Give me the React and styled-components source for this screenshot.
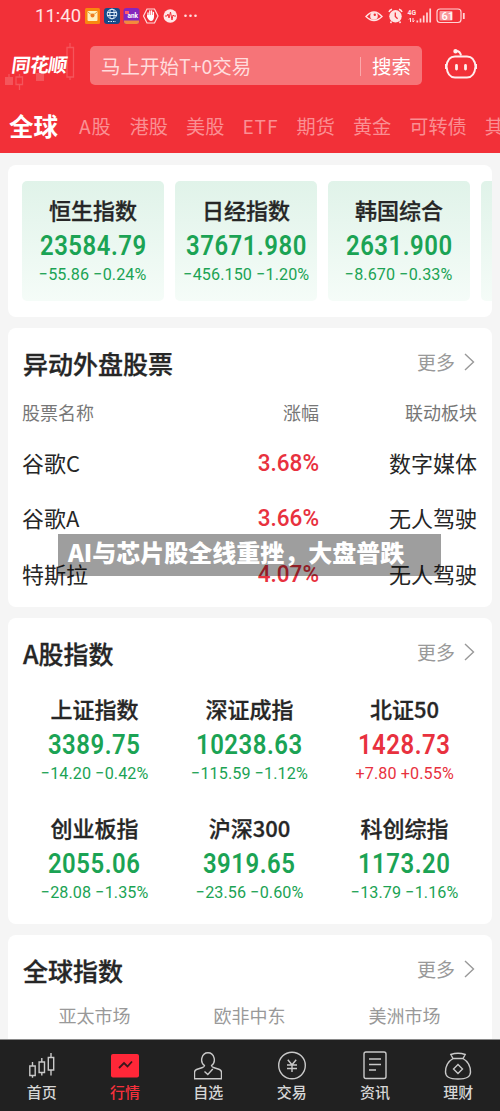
import React from "react";
import styled, { createGlobalStyle } from "styled-components";

const GlobalStyle = createGlobalStyle`
  * {
    box-sizing: border-box;
  }

  body {
    margin: 0;
    background: #f5f5f5;
    font-family: "Noto Sans CJK SC", sans-serif;
    color: #262626;
    overflow: hidden;
  }
`;

const GREEN = "#1ba354";
const RED = "#e8313e";

const Page = styled.div`
  position: relative;
  display: flex;
  flex-direction: column;
  width: 500px;
  height: 1111px;
  overflow: hidden;
`;

const Header = styled.header`
  flex: none;
  height: 153px;
  background: #f23038;
  color: #fff;
`;

const StatusBar = styled.div`
  display: flex;
  align-items: center;
  height: 32px;
  padding: 0 34px 0 35px;
`;

const Clock = styled.span`
  width: 50px;
  font-family: Roboto, sans-serif;
  font-size: 18.5px;
  line-height: 33px;
  white-space: nowrap;
  color: #ffe4e4;
`;

const SearchRow = styled.div`
  display: flex;
  align-items: center;
  height: 66px;
`;

const Logo = styled.div`
  position: relative;
  width: 90px;
  height: 66px;
  padding-left: 12px;
`;

const LogoCandles = styled.svg`
  position: absolute;
  left: 0;
  top: 8px;
`;

const LogoText = styled.span`
  position: relative;
  display: block;
  font-size: 19px;
  font-weight: 700;
  line-height: 63px;
  letter-spacing: -0.6px;
  white-space: nowrap;
  transform: skewX(-8deg);
`;

const SearchBox = styled.div`
  display: flex;
  align-items: center;
  width: 332px;
  height: 39px;
  padding: 0 11px;
  border-radius: 5px;
  background: #f67478;
  font-size: 19.5px;
  line-height: 37px;
`;

const Placeholder = styled.span`
  flex: 1;
  color: #ffdcdd;
`;

const SearchButton = styled.span`
  padding-left: 12px;
  background: linear-gradient(#fba9ab, #fba9ab) left 10px / 1px 19px no-repeat;
`;

const Robot = styled.svg`
  margin: 0 0 3px 21px;
`;

const Tabs = styled.nav`
  display: flex;
  align-items: center;
  gap: 18px;
  height: 55px;
  padding-left: 9px;
  overflow: hidden;
`;

const Tab = styled.span`
  flex: none;
  margin-right: ${(p) => (p.$active ? "3px" : 0)};
  font-size: ${(p) => (p.$active ? "24.5px" : "19.2px")};
  font-weight: ${(p) => (p.$active ? 700 : 400)};
  line-height: 56px;
  letter-spacing: ${(p) => (p.$latin ? "0.9px" : "normal")};
  color: ${(p) => (p.$active ? "#fff" : "#fa8f93")};
`;

const Content = styled.main`
  flex: 1;
  display: flex;
  flex-direction: column;
  gap: 11px;
  padding: 12px 8px 0;
  overflow: hidden;
`;

const Card = styled.section`
  flex: none;
  height: ${(p) => p.$height}px;
  border-radius: 8px;
  background: #fff;
  overflow: hidden;
`;

const TileStrip = styled.div`
  display: flex;
  gap: 11px;
  padding: 16px 0 0 14px;
`;

const Tile = styled.div`
  flex: none;
  width: 142px;
  height: 120px;
  padding-top: 12px;
  border-radius: 5px;
  background: linear-gradient(#e0f3e9, #f5fcf8);
`;

const Quote = styled.div`
  display: flex;
  flex-direction: column;
  align-items: center;
  white-space: nowrap;
  color: ${(p) => p.$color};
`;

const QuoteName = styled.div`
  font-size: 22px;
  font-weight: 500;
  line-height: 32px;
  color: #262626;
  -webkit-text-stroke: 0.3px #262626;
`;

const QuotePrice = styled.div`
  font-family: Roboto, sans-serif;
  font-size: 27.5px;
  font-weight: 600;
  line-height: 41px;
  letter-spacing: 0.6px;
  transform: scaleX(0.87);
`;

const QuoteChange = styled.div`
  font-family: Roboto, sans-serif;
  font-size: 17px;
  line-height: 16px;
  letter-spacing: 0.1px;
  transform: scaleX(0.95);
`;

const SectionHead = styled.div`
  display: flex;
  align-items: center;
  justify-content: space-between;
  height: 68px;
  padding: 0 17px 0 15px;
`;

const SectionTitle = styled.h2`
  margin: 0;
  padding-top: 2px;
  font-size: 25px;
  font-weight: 500;
  line-height: 68px;
  -webkit-text-stroke: 0.3px #262626;
`;

const More = styled.span`
  display: flex;
  align-items: center;
  gap: 9px;
  font-size: 19px;
  line-height: 66px;
  color: #999;
`;

const StockRow = styled.div`
  display: grid;
  grid-template-columns: 150px 1fr 158px;
  align-items: center;
  height: ${(p) => (p.$head ? "32px" : "55.5px")};
  padding: 0 15px 0 14px;
  font-size: ${(p) => (p.$head ? "18px" : "22px")};
  color: ${(p) => (p.$head ? "#777" : "#262626")};
`;

const StockList = styled.div`
  padding-top: 6px;
`;

const Cell = styled.span`
  text-align: ${(p) => (p.$right ? "right" : "left")};
`;

const Percent = styled.span`
  padding-top: 1px;
  font-family: Roboto, sans-serif;
  font-size: 24.5px;
  font-weight: 500;
  text-align: right;
  transform: scaleX(0.92);
  transform-origin: right;
  color: ${RED};
`;

const QuoteGrid = styled.div`
  display: grid;
  grid-template-columns: repeat(3, 155px);
  grid-auto-rows: 119.5px;
  padding: 6px 0 0 9px;
`;

const MarketTabs = styled.div`
  display: grid;
  grid-template-columns: repeat(3, 155px);
  padding: 0 0 0 9px;
  font-size: 18px;
  line-height: 24px;
  text-align: center;
  color: #999;
`;

const Banner = styled.div`
  position: absolute;
  left: 58px;
  top: 534px;
  width: 383px;
  height: 42px;
  padding-left: 10px;
  background: rgba(0, 0, 0, 0.38);
  font-size: 24px;
  font-weight: 900;
  line-height: 36px;
  white-space: nowrap;
  color: #fff;
`;

const BottomNav = styled.nav`
  flex: none;
  display: grid;
  grid-template-columns: repeat(6, 1fr);
  height: 72px;
  border-top: 1px solid #8a8a8a;
  background: #212121;
`;

const NavItem = styled.div`
  display: flex;
  flex-direction: column;
  align-items: center;
  padding-top: 9px;
  font-size: 15px;
  line-height: 21px;
  font-weight: 500;
  color: ${(p) => (p.$active ? "#f5303c" : "#d6d6d6")};
`;

const globalQuotes = [
  { name: "恒生指数", price: "23584.79", change: "−55.86 −0.24%" },
  { name: "日经指数", price: "37671.980", change: "−456.150 −1.20%" },
  { name: "韩国综合", price: "2631.900", change: "−8.670 −0.33%" },
];

const aQuotes = [
  { name: "上证指数", price: "3389.75", change: "−14.20 −0.42%" },
  { name: "深证成指", price: "10238.63", change: "−115.59 −1.12%" },
  { name: "北证50", price: "1428.73", change: "+7.80 +0.55%", up: true },
  { name: "创业板指", price: "2055.06", change: "−28.08 −1.35%" },
  { name: "沪深300", price: "3919.65", change: "−23.56 −0.60%" },
  { name: "科创综指", price: "1173.20", change: "−13.79 −1.16%" },
];

const stocks = [
  { name: "谷歌C", percent: "3.68%", sector: "数字媒体" },
  { name: "谷歌A", percent: "3.66%", sector: "无人驾驶" },
  { name: "特斯拉", percent: "4.07%", sector: "无人驾驶" },
];

const tabs = ["全球", "A股", "港股", "美股", "ETF", "期货", "黄金", "可转债", "其"];

const StatusIcons = () => (
  <svg width="116" height="20" viewBox="85 6 116 20">
    <rect x="85" y="8" width="15" height="16" rx="1.5" fill="#f9870f" />
    <rect x="87.500" y="11" width="10" height="10" rx="1" fill="#fff0bf" />
    <path d="M88 12q4.500 5 9 0" fill="none" stroke="#e7a13c" />
    <circle cx="92.500" cy="15.500" r="2" fill="#ee7d20" />
    <rect x="104" y="8" width="16" height="16" rx="3" fill="#174a88" />
    <g fill="none" stroke="#dcecf8" strokeWidth="1">
      <circle cx="112" cy="14" r="4.800" />
      <ellipse cx="112" cy="14" rx="2.200" ry="4.800" />
      <path d="M107 12.500h10M107 15.500h10" />
      <path d="M108 21.500h8" strokeDasharray="1.500 1" />
    </g>
    <rect x="123.500" y="8" width="16" height="16" rx="3" fill="#8526bd" />
    <path d="M124 20.500h15v1q0 2.500-2.500 2.500h-10q-2.500 0-2.500-2.500z" fill="#f48a3c" />
    <path d="M125 11h4v3h-4z" fill="#ff5b6c" />
    <text x="127.500" y="18" fontFamily="Roboto" fontSize="6.500" fontWeight="700" fill="#fff">ank</text>
    <path d="M147 9h7.500l3.500 7-3.500 7H147l-3.500-7z" fill="none" stroke="#ffd9da" strokeWidth="1.200" />
    <path d="M148 16v-3M149.800 15v-4M151.600 15v-4M153.400 16v-3.500" stroke="#fff" strokeWidth="1.300" strokeLinecap="round" />
    <path d="M147 15h7v2q-.5 4-3 4-2 0-4-4z" fill="#fff" />
    <circle cx="170.300" cy="16" r="6.800" fill="#ffe6e6" />
    <path d="M165 16h2l1-2 1 4 1.500-6 1.500 8 1-5 1 1h2" fill="none" stroke="#f23038" />
    <g fill="#ffdfe0">
      <circle cx="185.500" cy="15.700" r="1.300" />
      <circle cx="190.500" cy="15.700" r="1.300" />
      <circle cx="195.500" cy="15.700" r="1.300" />
    </g>
  </svg>
);

const SystemSvg = styled.svg`
  margin-left: auto;
`;

const SystemIcons = () => (
  <SystemSvg width="104" height="20" viewBox="362 6 104 20">
    <path d="M366 16.500q8-9 16 0-8 8-16 0z" fill="none" stroke="#ffe4e4" strokeWidth="1.400" />
    <circle cx="374" cy="16" r="3.800" fill="#ffe4e4" />
    <circle cx="374.800" cy="14.800" r="1.200" fill="#f23038" />
    <circle cx="395.500" cy="16.300" r="6.200" fill="#ffe4e4" />
    <path d="M389 12q.5-2 3-2.800M402 12q-.5-2-3-2.800M391.500 21.500l-1 1.500M399.500 21.500l1 1.500" stroke="#ffe4e4" strokeWidth="1.500" fill="none" />
    <path d="M395.300 12.500v4l2.300 2.300" fill="none" stroke="#f23038" strokeWidth="1.300" />
    <text x="407.500" y="14.500" fontFamily="Roboto" fontSize="7.500" fontWeight="700" fill="#ffe4e4" textLength="8.500" lengthAdjust="spacingAndGlyphs">4G</text>
    <path d="M410.500 22v-4l-1.500 1.500M413 18v4l1.500-1.500" fill="none" stroke="#ffe4e4" />
    <path d="M417.300 22.500v-2M420.500 22.500v-4M423.700 22.500v-7M427 22.500v-10M430.200 22.500V8.500" stroke="#ffd4d5" strokeWidth="1.700" />
    <rect x="437" y="9" width="24" height="13.500" rx="3" fill="none" stroke="#ffd4d5" strokeWidth="1.200" />
    <rect x="439.500" y="11" width="13" height="9.500" rx="1" fill="#f99a9d" />
    <path d="M463.800 13v6" stroke="#ffd4d5" strokeWidth="1.800" />
    <text x="441.500" y="19.800" fontFamily="Roboto" fontSize="11" fontWeight="500" fill="#fff">61</text>
  </SystemSvg>
);

const Chevron = () => (
  <svg width="11" height="18" viewBox="0 0 11 18" fill="none" stroke="#999" strokeWidth="1.400">
    <path d="M1 1l8.500 8L1 17" />
  </svg>
);

const QuoteBlock = ({ quote }) => (
  <Quote $color={quote.up ? RED : GREEN}>
    <QuoteName>{quote.name}</QuoteName>
    <QuotePrice>{quote.price}</QuotePrice>
    <QuoteChange>{quote.change}</QuoteChange>
  </Quote>
);

const SectionHeader = ({ title }) => (
  <SectionHead>
    <SectionTitle>{title}</SectionTitle>
    <More>
      更多
      <Chevron />
    </More>
  </SectionHead>
);

const navItems = [
  {
    label: "首页",
    icon: (
      <path d="M4.500 13v4M1.800 17h5.400v9.500H1.800zM4.500 26.500v2.200M13.800 9v4M11.100 13h5.400v10.500h-5.400zM13.800 23.500v3M23 4v4.500M20.300 8.500h5.400v12.500h-5.400zM23 21v5.500" />
    ),
  },
  {
    label: "行情",
    active: true,
    icon: (
      <>
        <rect x="0" y="5" width="28" height="23.500" rx="2" fill="#ff2738" stroke="none" />
        <path d="M8 19l5-5 3.500 3.500 4.500-5" stroke="#3c161b" strokeWidth="1.800" />
      </>
    ),
  },
  {
    label: "自选",
    icon: (
      <>
        <path d="M10.500 16.500C5.500 13 7.500 3.800 14 3.800S22.500 13 17.500 16.500q.2 1.500 2 2l6 2q2 .8 2 3v6.300h-27v-6.300q0-2.200 2-3l6-2q1.800-.5 2-2z" />
        <path d="M10.500 22.500l3.300 3 5-5.500" />
      </>
    ),
  },
  {
    label: "交易",
    icon: (
      <>
        <circle cx="14" cy="16.500" r="13.300" />
        <path d="M9.800 10.800l4.200 5 4.200-5M14 16v7M9 16h10M9 19.500h10" />
      </>
    ),
  },
  {
    label: "资讯",
    icon: (
      <>
        <rect x="3" y="3" width="22" height="26.500" rx="2" />
        <path d="M8 10h12M8 15.500h12M8 21h7" />
      </>
    ),
  },
  {
    label: "理财",
    icon: (
      <>
        <path d="M9 9.500L6.800 5.500q7.200-2.500 14.400 0L19 9.500z" />
        <path d="M9 9.500C3 13 1.500 19 1.500 23c0 5 3.500 7 12.500 7s12.500-2 12.500-7c0-4-1.500-10-7.500-13.500" />
        <path d="M14 15.500l4.500 4.500-4.500 4.500L9.500 20z" />
      </>
    ),
  },
];

const App = () => {
  return (
    <Page>
      <GlobalStyle />
      <Header>
        <StatusBar>
          <Clock>11:40</Clock>
          <StatusIcons />
          <SystemIcons />
        </StatusBar>
        <SearchRow>
          <Logo>
            <LogoCandles width="80" height="56" viewBox="0 40 80 56">
              <g fill="#f4555b">
                <rect x="5" y="77" width="8" height="8" />
                <rect x="36" y="73" width="8" height="8" />
              </g>
              <path d="M9 74v3M19.500 74v3M16 77h6.500v7.500H16zM19.500 84.500V90M40 68v5M70 43v4.500M67 47.500h6.500v29.500H67zM70 77v3" fill="none" stroke="#f4555b" strokeWidth="1.300" />
            </LogoCandles>
            <LogoText>同花顺</LogoText>
          </Logo>
          <SearchBox>
            <Placeholder>马上开始T+0交易</Placeholder>
            <SearchButton>搜索</SearchButton>
          </SearchBox>
          <Robot width="36" height="32" viewBox="0 0 36 32" fill="none" stroke="#ffeded" strokeWidth="2">
            <path d="M12.500 3q4.500-.5 5.500 4.500" />
            <circle cx="12.500" cy="3.200" r="1.200" fill="#fff" />
            <path d="M12 8.500h12q7.500 0 8.500 10-1 11-8.500 11H12q-7.500 0-8.500-11Q4.500 8.500 12 8.500z" />
            <path d="M3 16v5M33 16v5" />
            <path d="M13.500 17.500V21M22.500 17.500V21" strokeWidth="2.800" strokeLinecap="round" />
          </Robot>
        </SearchRow>
        <Tabs>
          {tabs.map((tab, i) => (
            <Tab key={tab} $active={i === 0} $latin={/^[A-Z]/.test(tab)}>
              {tab}
            </Tab>
          ))}
        </Tabs>
      </Header>

      <Content>
        <Card $height={152}>
          <TileStrip>
            {globalQuotes.map((quote) => (
              <Tile key={quote.name}>
                <QuoteBlock quote={quote} />
              </Tile>
            ))}
            <Tile />
          </TileStrip>
        </Card>

        <Card $height={278.5}>
          <SectionHeader title="异动外盘股票" />
          <StockRow $head>
            <Cell>股票名称</Cell>
            <Cell $right>涨幅</Cell>
            <Cell $right>联动板块</Cell>
          </StockRow>
          <StockList>
            {stocks.map((stock) => (
              <StockRow key={stock.name}>
                <Cell>{stock.name}</Cell>
                <Percent>{stock.percent}</Percent>
                <Cell $right>{stock.sector}</Cell>
              </StockRow>
            ))}
          </StockList>
        </Card>

        <Card $height={306}>
          <SectionHeader title="A股指数" />
          <QuoteGrid>
            {aQuotes.map((quote) => (
              <QuoteBlock key={quote.name} quote={quote} />
            ))}
          </QuoteGrid>
        </Card>

        <Card $height={200}>
          <SectionHeader title="全球指数" />
          <MarketTabs>
            <span>亚太市场</span>
            <span>欧非中东</span>
            <span>美洲市场</span>
          </MarketTabs>
        </Card>
      </Content>

      <Banner>AI与芯片股全线重挫，大盘普跌</Banner>

      <BottomNav>
        {navItems.map((item) => (
          <NavItem key={item.label} $active={item.active}>
            <svg width="28" height="32" viewBox="0 0 28 32" fill="none" stroke="#c9c9c9" strokeWidth="1.400">
              {item.icon}
            </svg>
            {item.label}
          </NavItem>
        ))}
      </BottomNav>
    </Page>
  );
};

export default App;
